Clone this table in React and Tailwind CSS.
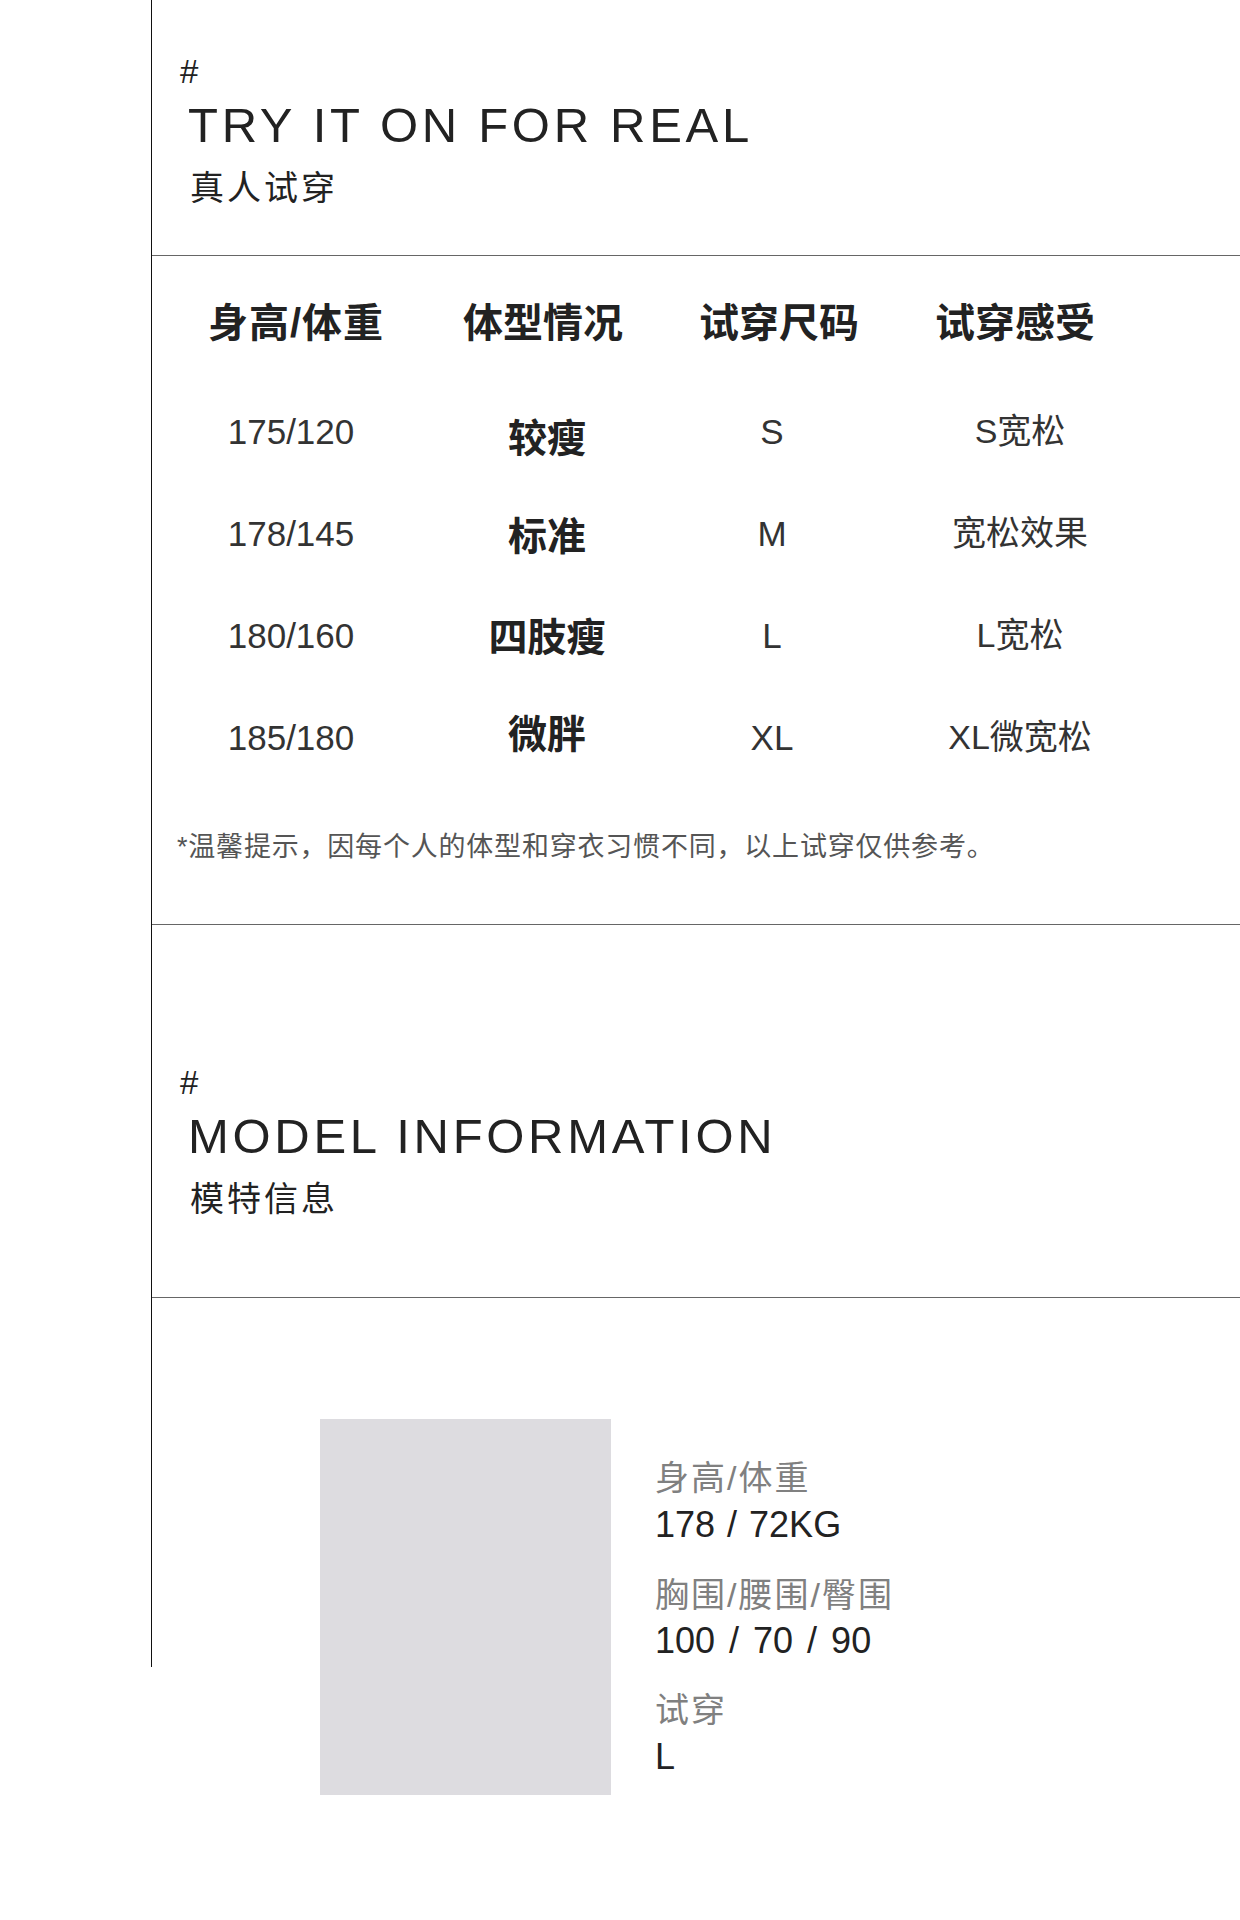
import React from 'react';

const rows = [
  { size: '175/120', body: '较瘦', fit: 'S', feel: 'S宽松', shift: 'mt-[14px]' },
  { size: '178/145', body: '标准', fit: 'M', feel: '宽松效果', shift: 'mt-[6px]' },
  { size: '180/160', body: '四肢瘦', fit: 'L', feel: 'L宽松', shift: 'mt-[4px]' },
  { size: '185/180', body: '微胖', fit: 'XL', feel: 'XL微宽松', shift: '-mt-[6px]' },
];

// header and body columns are not quite aligned in the design
const headCols = 'grid grid-cols-[240px_254px_218px_254px] pl-[24px]';
const bodyCols = 'grid grid-cols-[240px_272px_178px_318px] pl-[19px]';

function SectionTitle({ en, zh }) {
  return (
    <div className="pl-[28px] text-[#222]">
      <div className="text-[33px] leading-none">#</div>
      <div className="ml-[8px] mt-[13px] text-[49px] leading-none tracking-[3.7px]">{en}</div>
      <div className="ml-[10px] mt-[21px] text-[34px] leading-none tracking-[3px]">{zh}</div>
    </div>
  );
}

export default function App() {
  return (
    <div className="w-[1240px] h-[1920px] bg-white font-['Liberation_Sans','Noto_Sans_CJK_SC',sans-serif]">
      <div className="ml-[151px] h-[1667px] border-l border-[#111]">
        {/* try on */}
        <section className="h-[256px] border-b border-[#666] pt-[55px]">
          <SectionTitle en="TRY IT ON FOR REAL" zh="真人试穿" />
        </section>

        <section className="h-[669px] border-b border-[#666] pt-[37px]">
          <div className={`${headCols} h-[60px] items-center text-[40px] font-bold leading-none text-[#222]`}>
            <div className="text-center tracking-[1px]">身高/体重</div>
            <div className="text-center">体型情况</div>
            <div className="text-center">试穿尺码</div>
            <div className="text-center">试穿感受</div>
          </div>
          <div className="mt-[27px]">
            {rows.map((r) => (
              <div key={r.size} className={`${bodyCols} h-[102px] items-center leading-none text-[#333]`}>
                <div className="text-center text-[35px]">{r.size}</div>
                <div className={`text-center text-[39px] font-bold text-[#222] ${r.shift}`}>{r.body}</div>
                <div className="text-center text-[35px]">{r.fit}</div>
                <div className="text-center text-[34px]">{r.feel}</div>
              </div>
            ))}
          </div>
          <div className="mt-[39px] flex h-[40px] items-center pl-[25px] text-[27px] leading-none tracking-[0.8px] text-[#555]">
            *温馨提示，因每个人的体型和穿衣习惯不同，以上试穿仅供参考。
          </div>
        </section>

        {/* model */}
        <section className="h-[373px] border-b border-[#666] pt-[141px]">
          <SectionTitle en="MODEL INFORMATION" zh="模特信息" />
        </section>

        <section className="flex gap-[44px] pl-[168px] pt-[121px]">
          <div className="h-[376px] w-[291px] shrink-0 bg-[#dddce0]" />
          <div className="pt-[42px] leading-none">
            <div className="text-[34px] tracking-[2px] text-[#808080]">身高/体重</div>
            <div className="mt-[12px] text-[36px] text-[#222] [word-spacing:2px]">178 / 72KG</div>
            <div className="mt-[35px] text-[34px] tracking-[2px] text-[#808080]">胸围/腰围/臀围</div>
            <div className="mt-[11px] text-[36px] text-[#222] [word-spacing:4px]">100 / 70 / 90</div>
            <div className="mt-[34px] text-[34px] tracking-[2px] text-[#808080]">试穿</div>
            <div className="mt-[12px] text-[36px] text-[#222]">L</div>
          </div>
        </section>
      </div>
    </div>
  );
}
